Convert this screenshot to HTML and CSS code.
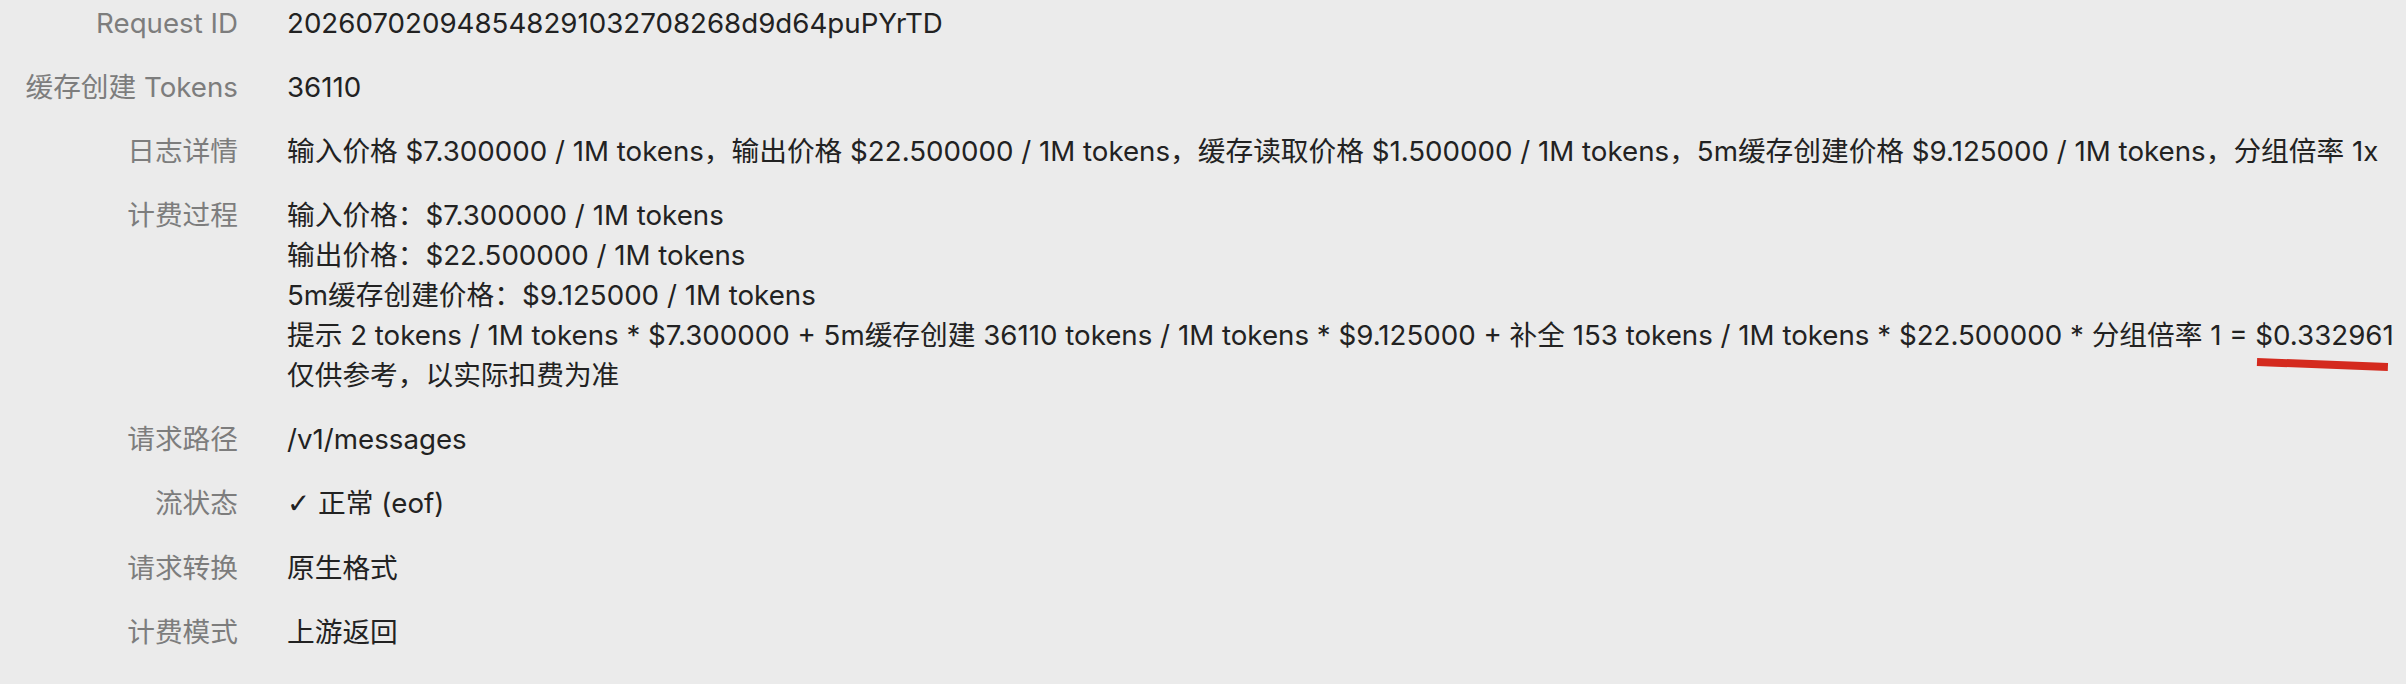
FILE: index.html
```html
<!DOCTYPE html>
<html lang="zh-CN">
<head>
    <meta charset="UTF-8">
    <meta name="viewport" content="width=device-width, initial-scale=1.0">
    <title>日志详情</title>
    <link rel="stylesheet" href="styles.css">
</head>
<body>
    <div class="details">
        <div class="row">
            <div class="label">Request ID</div>
            <div class="value">202607020948548291032708268d9d64puPYrTD</div>
        </div>
        <div class="row">
            <div class="label">缓存创建 Tokens</div>
            <div class="value">36110</div>
        </div>
        <div class="row">
            <div class="label">日志详情</div>
            <div class="value">输入价格 $7.300000 / 1M tokens，输出价格 $22.500000 / 1M tokens，缓存读取价格 $1.500000 / 1M tokens，5m缓存创建价格 $9.125000 / 1M tokens，分组倍率 1x</div>
        </div>
        <div class="row">
            <div class="label">计费过程</div>
            <div class="value">
                <div>输入价格：$7.300000 / 1M tokens</div>
                <div>输出价格：$22.500000 / 1M tokens</div>
                <div>5m缓存创建价格：$9.125000 / 1M tokens</div>
                <div>提示 2 tokens / 1M tokens * $7.300000 + 5m缓存创建 36110 tokens / 1M tokens * $9.125000 + 补全 153 tokens / 1M tokens * $22.500000 * 分组倍率 1 = <span class="total">$0.332961<i class="mark"></i></span></div>
                <div>仅供参考，以实际扣费为准</div>
            </div>
        </div>
        <div class="row">
            <div class="label">请求路径</div>
            <div class="value">/v1/messages</div>
        </div>
        <div class="row">
            <div class="label">流状态</div>
            <div class="value"><span class="check">✓</span> 正常 (eof)</div>
        </div>
        <div class="row">
            <div class="label">请求转换</div>
            <div class="value">原生格式</div>
        </div>
        <div class="row">
            <div class="label">计费模式</div>
            <div class="value">上游返回</div>
        </div>
    </div>
</body>
</html>
```

FILE: styles.css
```css
body {
    margin: 0;
    background-color: #ebebeb;
    font-family: Inter, "Noto Sans CJK SC", sans-serif;
    font-size: 27.7px;
    line-height: 40px;
    color: #222;
}
.details {
    display: flex;
    flex-direction: column;
    gap: 24px;
    padding-top: 3px;
}
.row {
    display: grid;
    grid-template-columns: 238px 1fr;
    column-gap: 49px;
}
.label {
    text-align: right;
    color: #7d7d7d;
    white-space: nowrap;
}
.value {
    white-space: nowrap;
}
.check {
    font-family: "DejaVu Sans", sans-serif;
}
.total {
    position: relative;
}
/* red pen stroke under the final amount */
.mark {
    position: absolute;
    left: 2px;
    top: 40px;
    width: 131px;
    height: 8px;
    background-color: #d42a1e;
    transform: rotate(2.2deg);
    transform-origin: left center;
}
```
